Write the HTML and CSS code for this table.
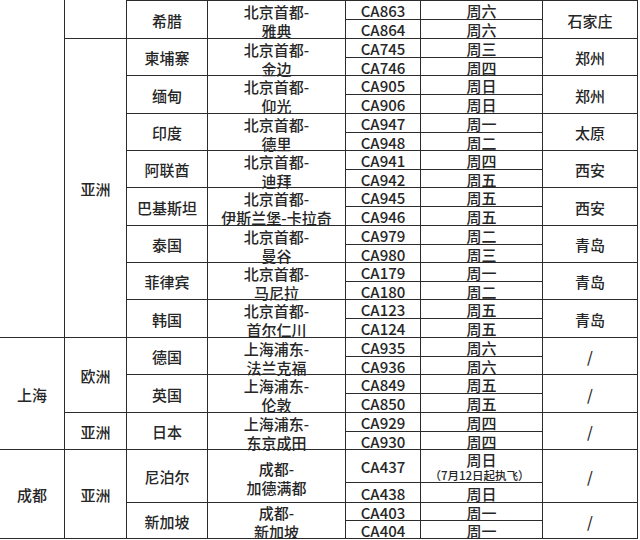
FILE: index.html
```html
<!DOCTYPE html>
<html lang="zh-CN">
<head>
<meta charset="utf-8">
<title>航班计划</title>
<link rel="stylesheet" href="styles.css">
</head>
<body>
<div class="sheet">
  <div class="c r18"></div>
  <div class="c r2"></div>
  <div class="c r2 top">希腊</div>
  <div class="c r2 top route"><div>北京首都-<br>雅典</div></div>
  <div class="c top">CA863</div>
  <div class="c top">周六</div>
  <div class="c r2 top">石家庄</div>
  <div class="c">CA864</div>
  <div class="c">周六</div>

  <div class="c r16">亚洲</div>
  <div class="c r2">柬埔寨</div>
  <div class="c r2 route"><div>北京首都-<br>金边</div></div>
  <div class="c">CA745</div>
  <div class="c">周三</div>
  <div class="c r2">郑州</div>
  <div class="c">CA746</div>
  <div class="c">周四</div>

  <div class="c r2">缅甸</div>
  <div class="c r2 route"><div>北京首都-<br>仰光</div></div>
  <div class="c">CA905</div>
  <div class="c">周日</div>
  <div class="c r2">郑州</div>
  <div class="c">CA906</div>
  <div class="c">周日</div>

  <div class="c r2">印度</div>
  <div class="c r2 route"><div>北京首都-<br>德里</div></div>
  <div class="c">CA947</div>
  <div class="c">周一</div>
  <div class="c r2">太原</div>
  <div class="c">CA948</div>
  <div class="c">周二</div>

  <div class="c r2">阿联酋</div>
  <div class="c r2 route"><div>北京首都-<br>迪拜</div></div>
  <div class="c">CA941</div>
  <div class="c">周四</div>
  <div class="c r2">西安</div>
  <div class="c">CA942</div>
  <div class="c">周五</div>

  <div class="c r2">巴基斯坦</div>
  <div class="c r2 route"><div>北京首都-<br>伊斯兰堡-卡拉奇</div></div>
  <div class="c">CA945</div>
  <div class="c">周五</div>
  <div class="c r2">西安</div>
  <div class="c">CA946</div>
  <div class="c">周五</div>

  <div class="c r2">泰国</div>
  <div class="c r2 route"><div>北京首都-<br>曼谷</div></div>
  <div class="c">CA979</div>
  <div class="c">周二</div>
  <div class="c r2">青岛</div>
  <div class="c">CA980</div>
  <div class="c">周三</div>

  <div class="c r2">菲律宾</div>
  <div class="c r2 route"><div>北京首都-<br>马尼拉</div></div>
  <div class="c">CA179</div>
  <div class="c">周一</div>
  <div class="c r2">青岛</div>
  <div class="c">CA180</div>
  <div class="c">周二</div>

  <div class="c r2">韩国</div>
  <div class="c r2 route"><div>北京首都-<br>首尔仁川</div></div>
  <div class="c">CA123</div>
  <div class="c">周五</div>
  <div class="c r2">青岛</div>
  <div class="c">CA124</div>
  <div class="c">周五</div>

  <div class="c r6">上海</div>
  <div class="c r4">欧洲</div>
  <div class="c r2">德国</div>
  <div class="c r2 route"><div>上海浦东-<br>法兰克福</div></div>
  <div class="c">CA935</div>
  <div class="c">周六</div>
  <div class="c r2 slash">/</div>
  <div class="c">CA936</div>
  <div class="c">周六</div>

  <div class="c r2">英国</div>
  <div class="c r2 route"><div>上海浦东-<br>伦敦</div></div>
  <div class="c">CA849</div>
  <div class="c">周五</div>
  <div class="c r2 slash">/</div>
  <div class="c">CA850</div>
  <div class="c">周五</div>

  <div class="c r2">亚洲</div>
  <div class="c r2">日本</div>
  <div class="c r2 route"><div>上海浦东-<br>东京成田</div></div>
  <div class="c">CA929</div>
  <div class="c">周四</div>
  <div class="c r2 slash">/</div>
  <div class="c">CA930</div>
  <div class="c">周四</div>

  <div class="c r4">成都</div>
  <div class="c r4">亚洲</div>
  <div class="c r2">尼泊尔</div>
  <div class="c r2 route"><div>成都-<br>加德满都</div></div>
  <div class="c">CA437</div>
  <div class="c day"><div>周日<span class="note">（7月12日起执飞）</span></div></div>
  <div class="c r2 slash">/</div>
  <div class="c">CA438</div>
  <div class="c">周日</div>

  <div class="c r2">新加坡</div>
  <div class="c r2 route"><div>成都-<br>新加坡</div></div>
  <div class="c">CA403</div>
  <div class="c">周一</div>
  <div class="c r2 slash">/</div>
  <div class="c">CA404</div>
  <div class="c">周一</div>
</div>
</body>
</html>
```
FILE: styles.css
```css
html, body {
  margin: 0;
  padding: 0;
  background: #ffffff;
}

body {
  font-family: "Noto Sans CJK SC", "Noto Sans", sans-serif;
  color: #262626;
}

.sheet {
  display: grid;
  width: 638px;
  grid-template-columns: 65px 62px 81px 138px 75px 122px 95px;
  grid-template-rows:
    20px 19px 19px 18px 19px 19px 19px 18px 19px 18px
    19px 19px 19px 18px 19px 18px 19px 19px 19px 18px
    19px 19px 19px 18px 33px 20px 18px 18px;
}

.c {
  box-sizing: border-box;
  border-right: 1px solid #2b2b2b;
  border-bottom: 1px solid #2b2b2b;
  display: flex;
  align-items: center;
  justify-content: center;
  text-align: center;
  font-size: 15px;
  font-weight: 500;
  line-height: 19px;
  padding-top: 1px;
  white-space: nowrap;
  min-height: 0;
  min-width: 0;
  overflow: visible;
}

.top { border-top: 1px solid #2b2b2b; }

.r2 { grid-row: span 2; }
.r4 { grid-row: span 4; }
.r6 { grid-row: span 6; }
.r16 { grid-row: span 16; }
.r18 { grid-row: span 18; }

.route { padding-top: 3px; }

.day { line-height: 17px; padding-top: 0; }

.note {
  display: block;
  font-size: 11.5px;
  line-height: 14px;
  margin-left: -4px;
}

.slash { font-size: 15px; }
```
